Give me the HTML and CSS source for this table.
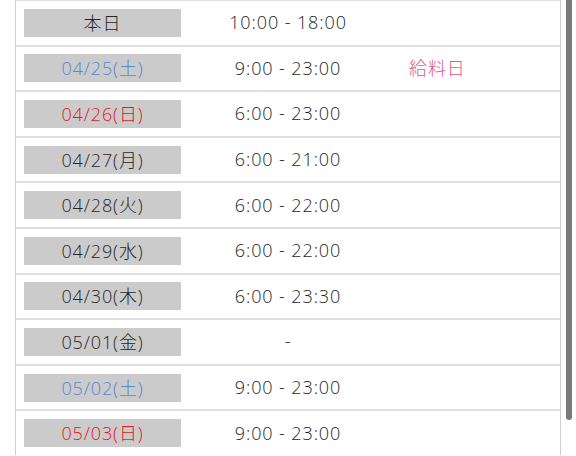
FILE: index.html
```html
<!DOCTYPE html>
<html lang="ja">
<head>
<meta charset="utf-8">
<link rel="stylesheet" href="styles.css">
</head>
<body>
<div class="table">
  <div class="row"><div class="day">本日</div><div class="time">10:00 - 18:00</div><div class="note"></div></div>
  <div class="row"><div class="day sat">04/25(土)</div><div class="time">9:00 - 23:00</div><div class="note">給料日</div></div>
  <div class="row"><div class="day sun">04/26(日)</div><div class="time">6:00 - 23:00</div><div class="note"></div></div>
  <div class="row"><div class="day">04/27(月)</div><div class="time">6:00 - 21:00</div><div class="note"></div></div>
  <div class="row"><div class="day">04/28(火)</div><div class="time">6:00 - 22:00</div><div class="note"></div></div>
  <div class="row"><div class="day">04/29(水)</div><div class="time">6:00 - 22:00</div><div class="note"></div></div>
  <div class="row"><div class="day">04/30(木)</div><div class="time">6:00 - 23:30</div><div class="note"></div></div>
  <div class="row"><div class="day">05/01(金)</div><div class="time">-</div><div class="note"></div></div>
  <div class="row"><div class="day sat">05/02(土)</div><div class="time">9:00 - 23:00</div><div class="note"></div></div>
  <div class="row"><div class="day sun">05/03(日)</div><div class="time">9:00 - 23:00</div><div class="note"></div></div>
</div>
<div class="scrollbar"></div>
</body>
</html>
```
FILE: styles.css
```css
html, body {
  margin: 0;
  padding: 0;
  overflow: hidden;
  background: #fff;
  height: 456px;
}
body {
  font-family: "Open Sans", "Noto Sans CJK JP", sans-serif;
  font-weight: 300;
  color: #262626;
  font-size: 18px;
  letter-spacing: 0.9px;
  position: relative;
}
.table {
  margin: -1px 0 0 15px;
  width: 544px;
  border-left: 1px solid #cfcfcf;
  border-right: 1px solid #cfcfcf;
}
.row {
  display: grid;
  grid-template-columns: 157px 214px 1fr;
  align-items: center;
  height: 43.6px;
  padding-left: 8px;
  border-top: 2px solid #dedede;
}
.day {
  height: 28px;
  line-height: 28px;
  background: #cbcbcb;
  text-align: center;
}
.day.sat { color: #5689d0; }
.day.sun { color: #e8141c; }
.time {
  text-align: center;
  line-height: 24px;
  margin-top: -1px;
}
.note {
  padding-left: 14px;
  color: #e05a86;
  line-height: 24px;
  margin-top: -1px;
}
.scrollbar {
  position: absolute;
  left: 566px;
  top: 0;
  width: 6px;
  height: 420px;
  background: #7a7a7a;
  border-radius: 0 0 3px 3px;
}
```
